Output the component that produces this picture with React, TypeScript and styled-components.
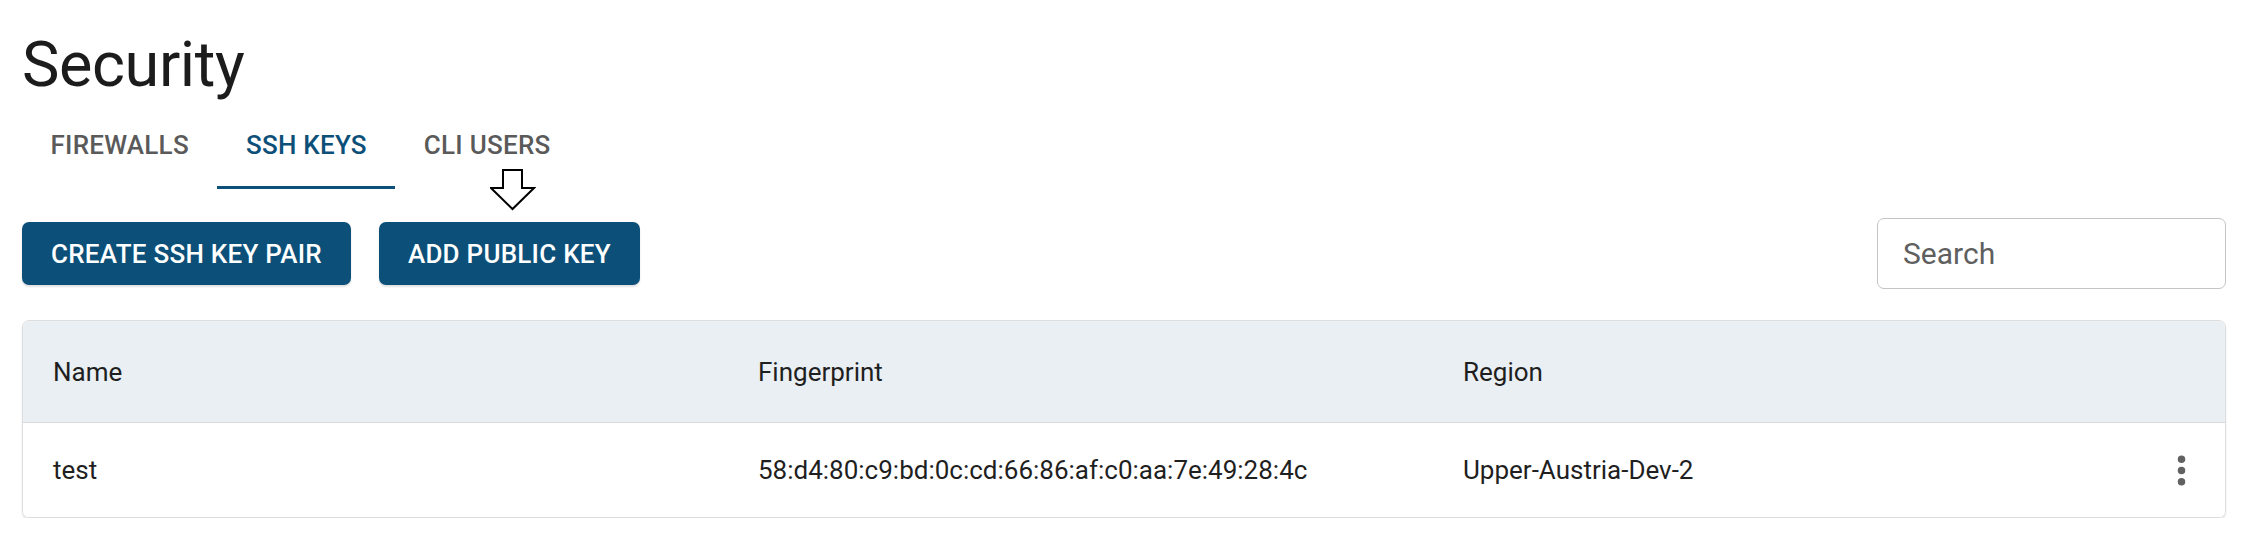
import React from "react";
import styled, { createGlobalStyle } from "styled-components";

const GlobalStyle = createGlobalStyle`
  body {
    margin: 0;
    background: #fff;
    font-family: Roboto, "Liberation Sans", sans-serif;
    color: #212121;
  }
  * {
    box-sizing: border-box;
  }
`;

const Page = styled.div`
  position: relative;
  padding: 30px 22px 0 22px;
`;

const Title = styled.h1`
  margin: 0;
  font-size: 63px;
  font-weight: 400;
  line-height: 70px;
  letter-spacing: -0.4px;
  color: #1c1c1c;
`;

const TabBar = styled.div`
  display: flex;
  height: 89px;
`;

const Tab = styled.button<{ active?: boolean }>`
  position: relative;
  display: flex;
  align-items: center;
  justify-content: center;
  padding: 0 28.5px;
  border: none;
  background: none;
  font-family: Roboto, "Liberation Sans", sans-serif;
  font-size: 26px;
  font-weight: 500;
  letter-spacing: 0.25px;
  text-transform: uppercase;
  color: ${(props) => (props.active ? "#0c5079" : "#5a5a5a")};
  cursor: pointer;
  &::after {
    content: "";
    position: absolute;
    left: 0;
    right: 0;
    bottom: 0;
    height: 3px;
    background: ${(props) => (props.active ? "#0c5079" : "transparent")};
  }
`;

const Hint = styled.svg`
  position: absolute;
  left: 490px;
  top: 169px;
`;

const Toolbar = styled.div`
  display: flex;
  align-items: center;
  justify-content: space-between;
  margin-top: 29px;
  height: 71px;
`;

const ButtonGroup = styled.div`
  display: flex;
  gap: 28px;
`;

const Button = styled.button`
  height: 63px;
  padding: 0 29px;
  border: none;
  border-radius: 7px;
  background: #0c5079;
  color: #fff;
  font-family: Roboto, "Liberation Sans", sans-serif;
  font-size: 26px;
  font-weight: 500;
  letter-spacing: 0.25px;
  text-transform: uppercase;
  box-shadow: 0 2px 2px rgba(0, 0, 0, 0.12);
  cursor: pointer;
`;

const SearchInput = styled.input`
  width: 349px;
  height: 71px;
  padding: 0 25px;
  border: 1px solid #c4c4c4;
  border-radius: 7px;
  font-family: Roboto, "Liberation Sans", sans-serif;
  font-size: 30px;
  color: #212121;
  outline: none;
  &::placeholder {
    color: #5f5f5f;
    opacity: 1;
  }
`;

const Table = styled.div`
  margin-top: 31px;
  border: 1px solid #dedede;
  border-radius: 7px;
  overflow: hidden;
  box-shadow: 0 2px 2px rgba(0, 0, 0, 0.1);
`;

const Row = styled.div<{ head?: boolean }>`
  display: grid;
  grid-template-columns: 705px 705px 1fr 88px;
  align-items: center;
  height: ${(props) => (props.head ? "102px" : "94px")};
  background: ${(props) => (props.head ? "#eaeff3" : "#fff")};
  border-bottom: ${(props) => (props.head ? "1px solid #dadada" : "none")};
`;

const Cell = styled.div`
  padding-left: 30px;
  font-size: 26px;
  line-height: 30px;
  color: #1f1f1f;
  white-space: nowrap;
`;

const ActionCell = styled.div`
  display: flex;
  justify-content: center;
  align-items: center;
`;

const KebabButton = styled.button`
  display: flex;
  padding: 0;
  border: none;
  background: none;
  cursor: pointer;
`;

function Kebab() {
  return (
    <svg width="45" height="45" viewBox="0 0 24 24" fill="#616161">
      <circle cx="12" cy="6" r="2" />
      <circle cx="12" cy="12" r="2" />
      <circle cx="12" cy="18" r="2" />
    </svg>
  );
}

const tabs = ["Firewalls", "SSH Keys", "CLI Users"];

const keys = [
  {
    name: "test",
    fingerprint: "58:d4:80:c9:bd:0c:cd:66:86:af:c0:aa:7e:49:28:4c",
    region: "Upper-Austria-Dev-2",
  },
];

function App() {
  return (
    <>
      <GlobalStyle />
      <Page>
        <Title>Security</Title>
        <TabBar>
          {tabs.map((tab) => (
            <Tab key={tab} active={tab === "SSH Keys"}>
              {tab}
            </Tab>
          ))}
        </TabBar>
        <Hint width="46" height="42" viewBox="0 0 46 42">
          <polygon
            points="13,1 32,1 32,19 44,19 22.5,40 1,19 13,19"
            fill="#fff"
            stroke="#000"
            strokeWidth="2"
            strokeLinejoin="miter"
          />
        </Hint>
        <Toolbar>
          <ButtonGroup>
            <Button>Create SSH Key Pair</Button>
            <Button>Add Public Key</Button>
          </ButtonGroup>
          <SearchInput placeholder="Search" />
        </Toolbar>
        <Table>
          <Row head>
            <Cell>Name</Cell>
            <Cell>Fingerprint</Cell>
            <Cell>Region</Cell>
            <ActionCell />
          </Row>
          {keys.map((key) => (
            <Row key={key.name}>
              <Cell>{key.name}</Cell>
              <Cell>{key.fingerprint}</Cell>
              <Cell>{key.region}</Cell>
              <ActionCell>
                <KebabButton>
                  <Kebab />
                </KebabButton>
              </ActionCell>
            </Row>
          ))}
        </Table>
      </Page>
    </>
  );
}

export default App;
